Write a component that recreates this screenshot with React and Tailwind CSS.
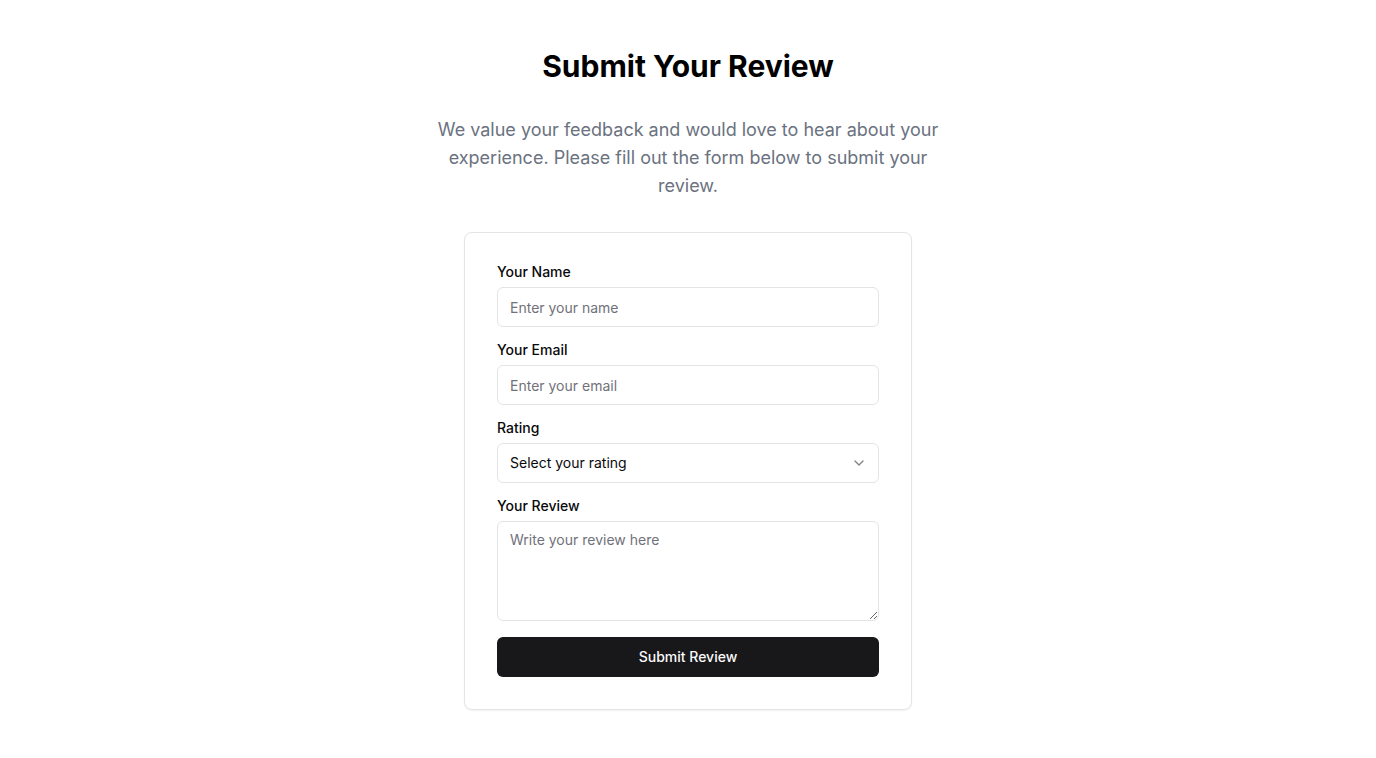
import { ChevronDown } from 'lucide-react'

function Field({ label, htmlFor, children }) {
  return (
    <div className="space-y-2">
      <label htmlFor={htmlFor} className="block text-sm font-medium leading-none text-[#09090b]">
        {label}
      </label>
      {children}
    </div>
  )
}

const inputClass =
  'flex h-10 w-full rounded-md border border-[#e4e4e7] bg-white px-3 py-2 text-sm text-[#09090b] placeholder:text-[#71717a] outline-none'

export default function App() {
  return (
    <div className="min-h-screen bg-white font-['Inter',sans-serif] text-[#09090b]">
      <div className="mx-auto max-w-lg py-12 text-center">
        <h1 className="text-3xl font-bold text-black">Submit Your Review</h1>
        <p className="mt-8 text-lg leading-7 text-[#6b7280]">
          We value your feedback and would love to hear about your experience. Please fill out the
          form below to submit your review.
        </p>
      </div>

      <div className="mx-auto -mt-4 w-full max-w-md rounded-lg border border-[#e4e4e7] bg-white p-8 shadow-xs">
        <form className="space-y-4" onSubmit={(e) => e.preventDefault()}>
          <Field label="Your Name" htmlFor="name">
            <input id="name" type="text" placeholder="Enter your name" className={inputClass} />
          </Field>
          <Field label="Your Email" htmlFor="email">
            <input id="email" type="email" placeholder="Enter your email" className={inputClass} />
          </Field>
          <Field label="Rating" htmlFor="rating">
            <div className="relative">
              <select
                id="rating"
                defaultValue=""
                className={inputClass + ' appearance-none pr-8'}
              >
                <option value="" disabled>
                  Select your rating
                </option>
                <option value="5">5 - Excellent</option>
                <option value="4">4 - Good</option>
                <option value="3">3 - Average</option>
                <option value="2">2 - Poor</option>
                <option value="1">1 - Terrible</option>
              </select>
              <ChevronDown className="pointer-events-none absolute right-3 top-3 h-4 w-4 text-[#09090b] opacity-50" />
            </div>
          </Field>
          <Field label="Your Review" htmlFor="review">
            <textarea
              id="review"
              placeholder="Write your review here"
              className="flex min-h-[100px] h-[100px] w-full rounded-md border border-[#e4e4e7] bg-white px-3 py-2 text-sm text-[#09090b] placeholder:text-[#71717a] outline-none"
            />
          </Field>
          <button
            type="submit"
            className="flex h-10 w-full items-center justify-center rounded-md bg-[#18181b] px-4 py-2 text-sm font-medium text-[#fafafa]"
          >
            Submit Review
          </button>
        </form>
      </div>
    </div>
  )
}
